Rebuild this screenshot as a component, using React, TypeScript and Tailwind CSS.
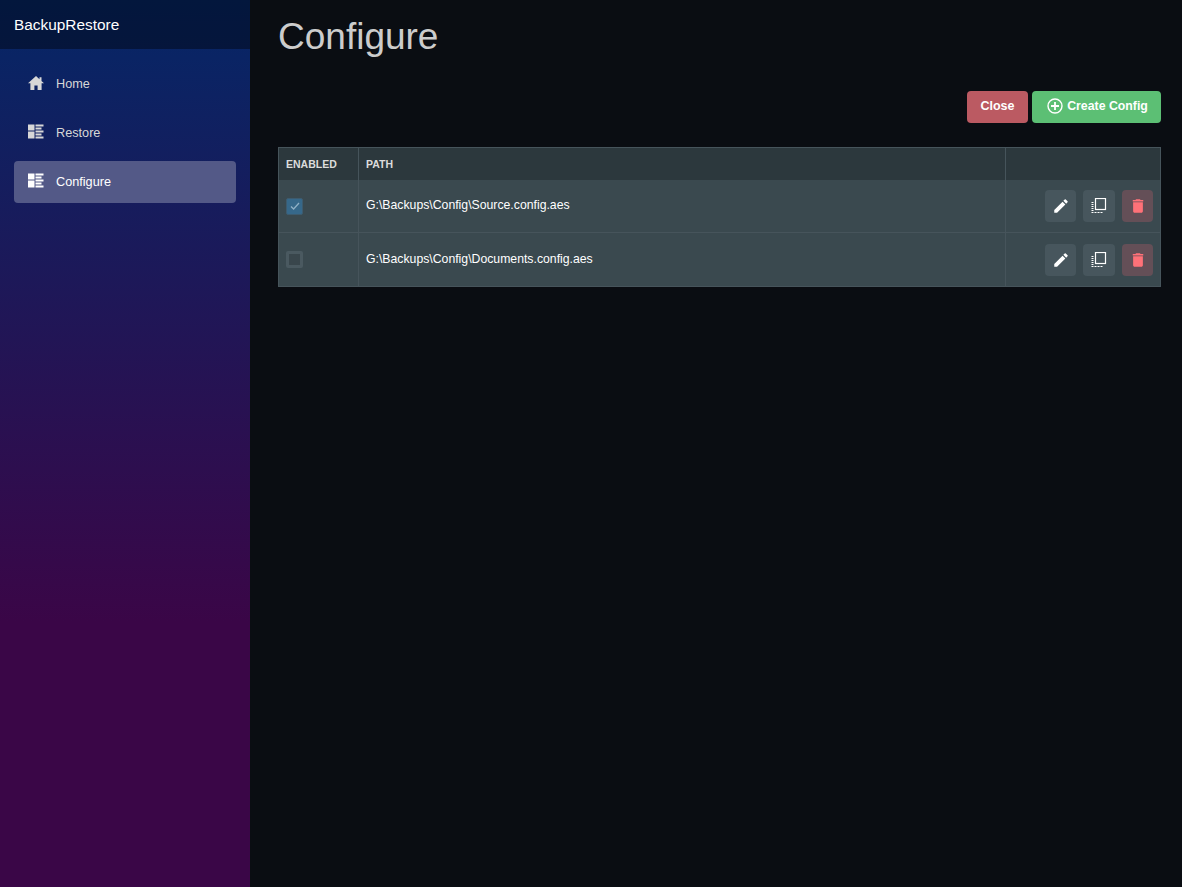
import React from "react";

function HomeIcon() {
  return (
    <svg width="16" height="14" viewBox="0 0 16 14" fill="currentColor">
      <path d="M8 0 0 7.2h2.4V14H6.4V9.5h3.2V14h4V7.2H16L13.5 5V1.2h-2v2z" />
    </svg>
  );
}

function QuiltIcon() {
  return (
    <svg width="16" height="15" viewBox="0 0 16 15" fill="currentColor">
      <path d="M0 0.5h6.5v6H0zM0 7.5h6.5v7H0zM7.5 0.5h8v2h-8zM7.5 3.5h6v2h-6zM7.5 6.5h8v2h-8zM7.5 9.5h6v2h-6zM7.5 12.5h8v2h-8z" />
    </svg>
  );
}

function NavItem({ label, icon, active }: { label: string; icon: React.ReactNode; active?: boolean }) {
  return (
    <div
      className={
        "flex h-[42px] items-center rounded pt-[2px] pl-[14px] text-[12.7px] " +
        (active ? "bg-[#535987] text-white" : "text-[#d7d7d7]")
      }
    >
      <span className="-mt-[5px] flex w-[28px] items-center">{icon}</span>
      {label}
    </div>
  );
}

function EditIcon() {
  return (
    <svg width="18" height="18" viewBox="0 0 24 24" fill="currentColor">
      <path d="M3 17.25V21h3.75L17.81 9.94l-3.75-3.75L3 17.25zM20.71 7.04a1 1 0 0 0 0-1.41l-2.34-2.34a1 1 0 0 0-1.41 0l-1.83 1.83 3.75 3.75 1.83-1.83z" />
    </svg>
  );
}

function CopyIcon() {
  return (
    <svg width="16" height="16" viewBox="0 0 16 16" fill="none" stroke="currentColor">
      <rect x="4.5" y="0.5" width="10" height="11" strokeWidth="1.2" />
      <path d="M0.5 4.5h2M0.5 6.5h2M0.5 8.5h2M0.5 10.5h2M0.5 12.5h2" />
      <path d="M0.5 14.5h11" strokeDasharray="2 1" />
    </svg>
  );
}

function TrashIcon() {
  return (
    <svg width="18" height="18" viewBox="0 0 24 24" fill="currentColor">
      <path d="M5.5 19c0 1.1.9 2 2 2h9c1.1 0 2-.9 2-2V7h-13v12zM19 4h-3.5l-1-1h-5l-1 1H5v2h14V4z" />
    </svg>
  );
}

function PlusCircleIcon() {
  return (
    <svg width="16" height="16" viewBox="0 0 16 16" fill="none" stroke="currentColor" strokeWidth="1.4">
      <circle cx="8" cy="8" r="7" />
      <path d="M8 4v8M4 8h8" strokeWidth="1.8" />
    </svg>
  );
}

function ConfigRow({ path, enabled, last }: { path: string; enabled?: boolean; last?: boolean }) {
  return (
    <div className={"flex h-[53px] " + (last ? "" : "border-b border-[#46545b]")}>
      <div className="flex w-[80px] items-center border-r border-[#46545b] pl-[7px]">
        {enabled ? (
          <span className="flex h-[17px] w-[17px] items-center justify-center rounded-[2px] border border-[#3d5b6e] bg-[#36688a] text-[#8fb0c6]">
            <svg width="10" height="8" viewBox="0 0 10 8" fill="none" stroke="currentColor" strokeWidth="1.3">
              <path d="M1 4.5 3.6 7 9 1" />
            </svg>
          </span>
        ) : (
          <span className="h-[17px] w-[17px] rounded-[2px] border-[3px] border-[#4a5960] bg-[#39464c]" />
        )}
      </div>
      <div className="flex w-[647px] items-center border-r border-[#46545b] pb-[1px] pl-[7px] text-[12.25px] text-white">
        {path}
      </div>
      <div className="flex flex-1 items-center justify-end gap-[7px] pr-[7px]">
        <button className="flex h-[32px] w-[31px] items-center justify-center rounded bg-[#47565d] text-white">
          <EditIcon />
        </button>
        <button className="flex h-[32px] w-[32px] items-center justify-center rounded bg-[#47565d] text-white">
          <CopyIcon />
        </button>
        <button className="flex h-[32px] w-[31px] items-center justify-center rounded bg-[#644f57] text-[#ff7178]">
          <TrashIcon />
        </button>
      </div>
    </div>
  );
}

export default function App() {
  return (
    <div className="flex h-[887px] w-full overflow-hidden bg-[#0a0d12] font-['Liberation_Sans',Arial,sans-serif]">
      <aside className="flex w-[250px] shrink-0 flex-col bg-[linear-gradient(180deg,#052767_0%,#3a0647_70%)]">
        <div className="flex h-[49px] items-center bg-black/40 pl-[14px] text-[15.4px] text-white">BackupRestore</div>
        <nav className="flex flex-col gap-[7px] px-[14px] pt-[14px]">
          <NavItem label="Home" icon={<HomeIcon />} />
          <NavItem label="Restore" icon={<QuiltIcon />} />
          <NavItem label="Configure" icon={<QuiltIcon />} active />
        </nav>
      </aside>
      <main className="flex-1 pl-[28px] pr-[21px]">
        <h1 className="pt-[15px] text-[37px] leading-[43px] text-[#cccccc]">Configure</h1>
        <div className="mt-[33px] flex justify-end gap-[4px]">
          <button className="h-[32px] w-[61px] rounded bg-[#bb5a62] pb-[2px] text-[12.5px] font-bold text-white">Close</button>
          <button className="flex h-[32px] w-[129px] items-center justify-center gap-[4px] rounded bg-[#5cbf74] pb-[2px] pl-[2px] text-[12.3px] font-bold text-white">
            <PlusCircleIcon />
            Create Config
          </button>
        </div>
        <div className="mt-[24px] border border-[#46545b] bg-[#3a494f]">
          <div className="flex h-[32px] bg-[#2c383d] text-[10.5px] font-bold leading-[32px] text-[#dcdcdc]">
            <div className="w-[80px] border-r border-[#46545b] pl-[7px]">ENABLED</div>
            <div className="w-[647px] border-r border-[#46545b] pl-[7px]">PATH</div>
            <div className="flex-1" />
          </div>
          <ConfigRow path="G:\Backups\Config\Source.config.aes" enabled />
          <ConfigRow path="G:\Backups\Config\Documents.config.aes" last />
        </div>
      </main>
    </div>
  );
}
